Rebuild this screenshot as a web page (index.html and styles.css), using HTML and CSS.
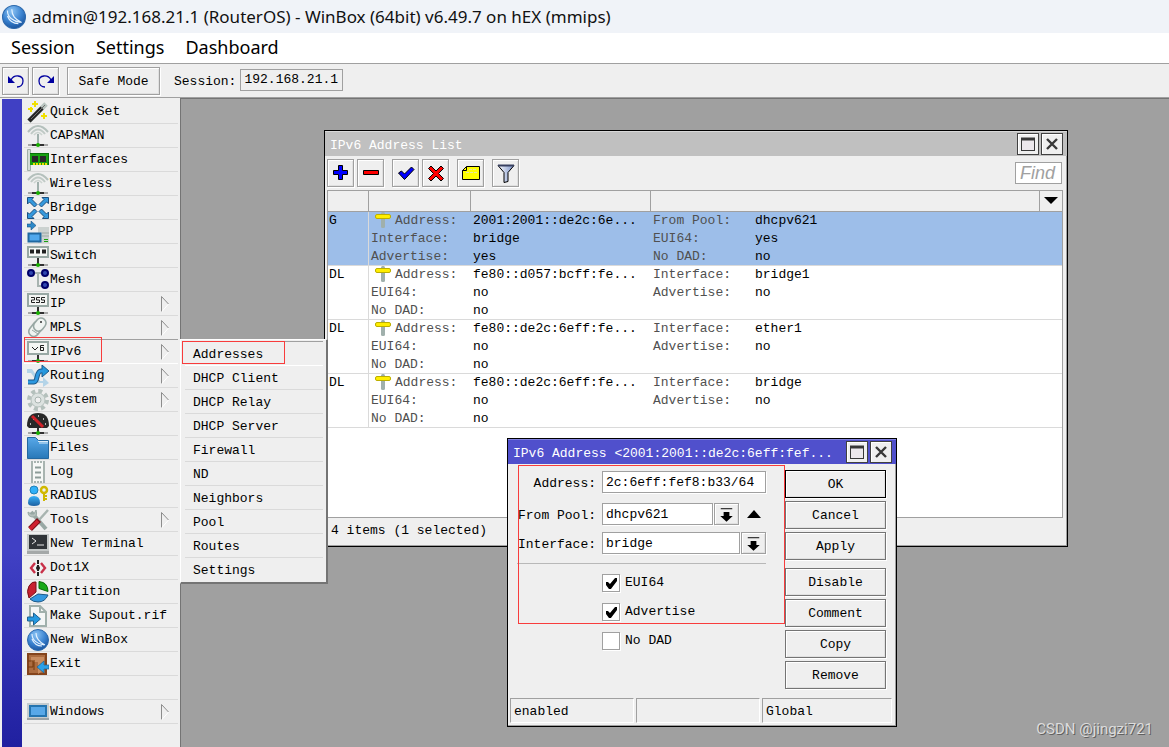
FILE: index.html
```html
<!DOCTYPE html>
<html lang="en">
<head>
<meta charset="utf-8">
<title>admin@192.168.21.1 (RouterOS) - WinBox</title>
<link rel="stylesheet" href="styles.css">
</head>
<body>
<svg class="defs" aria-hidden="true">
  <defs>
    <radialGradient id="ball" cx="40%" cy="25%" r="75%"><stop offset="0" stop-color="#8cc4f4"/><stop offset=".6" stop-color="#3a82d0"/><stop offset="1" stop-color="#1c56a0"/></radialGradient>
    <linearGradient id="folder" x2="0" y2="1"><stop offset="0" stop-color="#58a8e8"/><stop offset="1" stop-color="#2878b8"/></linearGradient>
    <linearGradient id="man" x2="0" y2="1"><stop offset="0" stop-color="#38b0f8"/><stop offset="1" stop-color="#1c60a0"/></linearGradient>
    <linearGradient id="steel" x2="1" y2="0"><stop offset="0" stop-color="#ffffff"/><stop offset="1" stop-color="#7890c8"/></linearGradient>
  </defs>
  <symbol id="logo" viewBox="0 0 22 22"><circle cx="11" cy="11" r="10.5" fill="url(#ball)" stroke="#2c68ac"/><path d="M5 5c0 6 5 10 12 11M9 4c0 6 3 9 9 12M5 10c2 5 6 7 10 7" fill="none" stroke="#e4f2ff" stroke-width="1.1"/></symbol>
  <symbol id="antenna" viewBox="0 0 22 22"><path d="M1 7Q11-5 21 7" fill="none" stroke="#b4c0bc" stroke-width="2"/><path d="M4 9Q11 0 18 9" fill="none" stroke="#c0cac6" stroke-width="2"/><path d="M7 10Q11 5 15 10" fill="none" stroke="#ccd4d0" stroke-width="1.6"/><path d="M11 9v10" stroke="#a0b0ac" stroke-width="2"/><path d="M1 20h20" stroke="#a8a8a8" stroke-width="2"/><path d="M5 20h12" stroke="#303030" stroke-width="2"/><circle cx="11" cy="20" r="2" fill="#18b000"/></symbol>
  <symbol id="netbase" viewBox="0 0 22 22"><path d="M11 12v8" stroke="#303030" stroke-width="2"/><path d="M1 20h20" stroke="#a8a8a8" stroke-width="2"/><path d="M5 20h12" stroke="#303030" stroke-width="2"/><circle cx="11" cy="20" r="2" fill="#18b000"/></symbol>
  <symbol id="arrow" viewBox="0 0 10 18"><path d="M1.500 17V1.500l7 7.500" fill="none" stroke="#8c8c8c"/><path d="M8.500 9l-7 8" fill="none" stroke="#fff"/></symbol>
  <symbol id="pin" viewBox="0 0 16 16"><rect x="6" y="0" width="4" height="16" rx="1.5" fill="#a0b0ac"/><rect x=".5" y="2.5" width="15" height="4" rx="1.5" fill="#ffee00" stroke="#bcae00"/></symbol>
  <symbol id="max" viewBox="0 0 20 20"><rect x="3.500" y="4.500" width="13" height="12" fill="#ece8ec" stroke="#383838"/><path d="M3 5h14" stroke="#383838" stroke-width="3"/></symbol>
  <symbol id="close" viewBox="0 0 20 20"><path d="M5 5l10 10M15 5l-10 10" stroke="#383838" stroke-width="2.400"/></symbol>
  <symbol id="drop" viewBox="0 0 24 20"><path d="M6 4.500h12" stroke="#000"/><path d="M9 8h6v4h3.500l-6.500 6-6.500-6H9z"/></symbol>
</svg>

<header class="titlebar"><svg class="logo"><use href="#logo"/></svg><h1>admin@192.168.21.1 (RouterOS) - WinBox (64bit) v6.49.7 on hEX (mmips)</h1></header>
<nav class="menubar"><button>Session</button><button>Settings</button><button>Dashboard</button></nav>
<div class="toolbar">
  <button class="raised tool" aria-label="Undo"><svg viewBox="0 0 24 24"><path d="M7 11c3-6 12-5 12 1 0 4-3 6-6 6" fill="none" stroke="#0000a0" stroke-width="1.3"/><path d="M4 7v7h7z" fill="#0000a0"/></svg></button>
  <button class="raised tool" aria-label="Redo"><svg viewBox="0 0 24 24"><path d="M17 11c-3-6-12-5-12 1 0 4 3 6 6 6" fill="none" stroke="#0000a0" stroke-width="1.3"/><path d="M20 7v7h-7z" fill="#0000a0"/></svg></button>
  <button class="raised safe">Safe Mode</button>
  <label for="session">Session:</label><input id="session" class="session" value="192.168.21.1" readonly>
</div>

<div class="main">
  <aside class="sidebar">
    <div class="strip"></div>
    <ul class="side">
      <li><button><svg viewBox="0 0 22 22"><path d="M2 20L19 3" stroke="#b8c4c0" stroke-width="5"/><path d="M2 20L15 7" stroke="#242424" stroke-width="4.500"/><path d="M4 18L18 4" stroke="#707070"/><path d="M8 0v6M5 3h6M4 6v5M1 8h5M17 12v6M14 15h6" stroke="#f0e000" stroke-width="2"/></svg>Quick Set</button></li>
      <li><button><svg><use href="#antenna"/></svg>CAPsMAN</button></li>
      <li><button><svg viewBox="0 0 22 22"><path d="M.5.500h3v21h-3z" fill="#d4dcd8" stroke="#a0b0a8"/><path d="M3 4h19v12H3z" fill="#18a010"/><path d="M3 4.500h19M21.500 4v12" stroke="#087008"/><path d="M5 7h6v6H5zM13 7h6v6h-6z" fill="#282828"/><path d="M6 15h15" stroke="#f0e000" stroke-width="2" stroke-dasharray="2 1"/></svg>Interfaces</button></li>
      <li><button><svg><use href="#antenna"/></svg>Wireless</button></li>
      <li><button><svg viewBox="0 0 22 22"><g fill="#3498dc" stroke="#1c5080"><path id="ba" d="M.5.500h6l-1.500 2 5 5-2.500 2.500-5-5-2 2z"/><use href="#ba" transform="rotate(90 11 11)"/><use href="#ba" transform="rotate(180 11 11)"/><use href="#ba" transform="rotate(270 11 11)"/></g></svg>Bridge</button></li>
      <li><button><svg viewBox="0 0 22 22"><path d="M11 6h11v16H11z" fill="#ccd2d0"/><path d="M15 12h7M15 15h7" stroke="#9ca8a4"/><path d="M17 18.500h4M17 20.500h4" stroke="#18a010"/><path d="M0 3h4V0l5 4.500L4 9V6H0z" fill="#2c88c8" stroke="#1c5080" stroke-width=".6"/><rect x="1.500" y="12.500" width="12" height="8" fill="#50a8ec" stroke="#2068a0" stroke-width="2"/></svg>PPP</button></li>
      <li><button><svg viewBox="0 0 22 22"><use href="#netbase"/><rect x="1" y="2" width="20" height="10" fill="#f4f6f4" stroke="#98a8a4" stroke-width="2"/><path d="M3 6.500h16" stroke="#202020" stroke-width="4" stroke-dasharray="4 2"/></svg>Switch</button></li>
      <li><button><svg viewBox="0 0 22 22"><path d="M4 4h14M11 4v13h7" fill="none" stroke="#a8b4b0" stroke-width="2"/><g fill="#3048b0" stroke="#000068" stroke-width="2"><circle cx="4" cy="4" r="3"/><circle cx="18" cy="4" r="3"/><circle cx="18" cy="16" r="3"/></g></svg>Mesh</button></li>
      <li><button><svg viewBox="0 0 22 22"><use href="#netbase"/><rect x="1" y="1" width="20" height="12" fill="#f4f6f4" stroke="#98a8a4" stroke-width="2"/><path d="M4 4.500h3.500v2.500H4.500v2.500H8M13 4.500H9.500v2.500h3v2.500H9M18 4.500h-3.500v2.500h3v2.500H14" fill="none" stroke="#202020"/></svg>IP<svg class="more"><use href="#arrow"/></svg></button></li>
      <li><button><svg viewBox="0 0 22 22"><g fill="#f0f4f2" stroke="#98a8a4" stroke-width="1.600"><rect x="4" y="4" width="10" height="17" rx="5" transform="rotate(38 10 12)"/><rect x="8" y="0" width="10" height="14" rx="5" transform="rotate(38 12 7)"/></g><path d="M5 13l6 4" stroke="#98a8a4"/><circle cx="14" cy="5" r="1" fill="#303030"/></svg>MPLS<svg class="more"><use href="#arrow"/></svg></button></li>
      <li class="open"><button aria-expanded="true"><svg viewBox="0 0 22 22"><use href="#netbase"/><rect x="1" y="1" width="20" height="12" fill="#f4f6f4" stroke="#98a8a4" stroke-width="2"/><path d="M5 6l3 3 3-3M17 4.500h-3.500v5h3v-3h-3" fill="none" stroke="#202020"/></svg>IPv6<svg class="more"><use href="#arrow"/></svg></button>
        <ul class="submenu">
          <li class="current"><button>Addresses</button></li>
          <li><button>DHCP Client</button></li>
          <li><button>DHCP Relay</button></li>
          <li><button>DHCP Server</button></li>
          <li><button>Firewall</button></li>
          <li><button>ND</button></li>
          <li><button>Neighbors</button></li>
          <li><button>Pool</button></li>
          <li><button>Routes</button></li>
          <li><button>Settings</button></li>
        </ul>
      </li>
      <li><button><svg viewBox="0 0 22 22"><path d="M0 4h5l8 12h3v-4l6 6-6 4v-4h-5L4 8H0z" fill="#b4d4e8"/><path d="M1 17h6c4 0 2-11 7-11h2" fill="none" stroke="#1c5888" stroke-width="5"/><path d="M15 0l7 6-7 6z" fill="#2498dc" stroke="#1c5888"/><path d="M1 17h6c4 0 2-11 7-11h3" fill="none" stroke="#2c98e0" stroke-width="3"/></svg>Routing<svg class="more"><use href="#arrow"/></svg></button></li>
      <li><button><svg viewBox="0 0 22 22"><circle cx="11" cy="11" r="9" fill="none" stroke="#b4c0bc" stroke-width="4" stroke-dasharray="4 3.070"/><circle cx="11" cy="11" r="7" fill="#dce2e0" stroke="#b4c0bc"/><circle cx="11" cy="11" r="3" fill="#f0f0f0" stroke="#a8b4b0"/></svg>System<svg class="more"><use href="#arrow"/></svg></button></li>
      <li><button><svg viewBox="0 0 22 22"><use href="#netbase"/><path d="M0 13Q0 0 11 0t11 13l-2 2H2z" fill="#282828"/><path d="M3 11h1M6 6h1M11 3h1M16 6h1M18 11h1" stroke="#e0e0e0" stroke-width="1.500"/><path d="M5 3l11 11" stroke="#d02028" stroke-width="3"/></svg>Queues</button></li>
      <li><button><svg viewBox="0 0 22 22"><path d="M.5.500h8l3 3h10v18H.5z" fill="url(#folder)" stroke="#2468a0"/><path d="M11 4.500h10M12 6h9" stroke="#d8ecfa"/></svg>Files</button></li>
      <li><button><svg viewBox="0 0 22 22"><path d="M4 1h14v20H4z" fill="#f6f8f6"/><path d="M5 0v22M17 0v22" stroke="#a8b4b0" stroke-width="2"/><path d="M4 1h14M4 21h14" stroke="#a8b4b0" stroke-width="2" stroke-dasharray="2 1"/><path d="M8 6.500h6M8 11.500h6M8 16.500h6" stroke="#8c9c98" stroke-width="2"/></svg>Log</button></li>
      <li><button><svg viewBox="0 0 22 22"><circle cx="7" cy="5" r="4" fill="#30b0f8" stroke="#2080b8"/><path d="M1 18q0-7 6-7t6 7q0 3-6 3t-6-3z" fill="url(#man)"/><circle cx="17" cy="5" r="3" fill="none" stroke="#d0b800" stroke-width="2.500"/><path d="M17 8v8M17 11h3M17 14h3" stroke="#d0b800" stroke-width="2"/></svg>RADIUS</button></li>
      <li><button><svg viewBox="0 0 22 22"><path d="M4 3l15 17" stroke="#98a8a4" stroke-width="4"/><path d="M1 3q0 5 5 5t3-7l-2 4-3 0z" fill="#b4c0bc" stroke="#98a8a4"/><path d="M21 1l-9 10" stroke="#a8b4b0" stroke-width="2.500"/><path d="M12 11l-9 9" stroke="#7c1018" stroke-width="5.500"/><path d="M11 12l-8 8" stroke="#d02030" stroke-width="3.500"/></svg>Tools<svg class="more"><use href="#arrow"/></svg></button></li>
      <li><button><svg viewBox="0 0 22 22"><path d="M0 1h22v18H0z" fill="#c4c8c8"/><path d="M0 18h22v3H0z" fill="#a4a8a8"/><path d="M2 2h18v14H2z" fill="#303438"/><path d="M5 5l4 3-4 3M10 12h7" fill="none" stroke="#e8e8e8"/></svg>New Terminal</button></li>
      <li><button><svg viewBox="0 0 22 22"><path d="M8 6l-4 5 4 5M14 6l4 5-4 5" fill="none" stroke="#c83048" stroke-width="2.400"/><path d="M11 3v16" stroke="#202020" stroke-width="2" stroke-dasharray="4 1 6 1"/><circle cx="11" cy="11" r="2" fill="#202020"/></svg>Dot1X</button></li>
      <li><button><svg viewBox="0 0 22 22"><path d="M9 1v10l-7 6Q-1 10 2 5t7-4z" fill="#c82030" stroke="#781018"/><path d="M12 .500q9 1 9 10l-9-3z" fill="#18a818" stroke="#086808"/><path d="M11 13l10 1q-3 7-10 7-5 0-8-3z" fill="#3498e0" stroke="#1c5888"/></svg>Partition</button></li>
      <li><button><svg viewBox="0 0 22 22"><path d="M3 1h10l6 6v14H3z" fill="#f4f6f6" stroke="#a0b0ac" stroke-width="2"/><path d="M13 1v6h6" fill="none" stroke="#a0b0ac" stroke-width="2"/><path d="M.5 12h6V8l7 6-7 6v-4h-6z" fill="#2498e0" stroke="#1c6090"/></svg>Make Supout.rif</button></li>
      <li><button><svg><use href="#logo"/></svg>New WinBox</button></li>
      <li><button><svg viewBox="0 0 22 22"><path d="M1 1h18v20H1z" fill="#ac6c40" stroke="#84441c" stroke-width="2"/><path d="M4 4h13v13l-6 4V9H4z" fill="#c88c60"/><path d="M1 8h5v6H1M7 7v10" fill="none" stroke="#74380c"/><path d="M22 12h-5V8l-7 6 7 6v-4h5z" fill="#2ca0e8" stroke="#1c6090" stroke-width=".7"/></svg>Exit</button></li>
      <li class="spacer"></li>
      <li><button><svg viewBox="0 0 22 22"><path d="M0 2h22v15H0z" fill="#c4ccd0"/><path d="M0 17h22v2H0z" fill="#9ca4a8"/><path d="M3 5h16v10H3z" fill="#58a8e8" stroke="#2474b0" stroke-width="2"/></svg>Windows<svg class="more"><use href="#arrow"/></svg></button></li>
    </ul>
    <div class="mark mark-ipv6"></div>
    <div class="mark mark-addresses"></div>
  </aside>

  <main class="desktop">
    <section class="window list">
      <header class="caption"><h2>IPv6 Address List</h2><button aria-label="Maximize"><svg><use href="#max"/></svg></button><button aria-label="Close"><svg><use href="#close"/></svg></button></header>
      <div class="actions">
        <button class="raised tool" aria-label="Add"><svg viewBox="0 0 24 24"><path d="M9.500 4.500h4v5h5v4h-5v5h-4v-5h-5v-4h5z" fill="#0000ff" stroke="#000"/></svg></button>
        <button class="raised tool" aria-label="Remove"><svg viewBox="0 0 24 24"><path d="M4.500 9.500h15v4h-15z" fill="#f00" stroke="#000"/></svg></button>
        <button class="raised tool gap" aria-label="Enable"><svg viewBox="0 0 24 24"><path d="M4.500 12l3-2 3 3 7-7 2.500 2.500-9.500 10z" fill="#00f" stroke="#000"/></svg></button>
        <button class="raised tool" aria-label="Disable"><svg viewBox="0 0 24 24"><path d="M4.500 7.500l2.500-2.500 5 5 5-5 2.500 2.500-5 5 5 5-2.500 2.500-5-5-5 5-2.500-2.500 5-5z" fill="#f00" stroke="#000"/></svg></button>
        <button class="raised tool gap" aria-label="Comment"><svg viewBox="0 0 24 24"><path d="M7.500 5.500h13v13h-17v-9z" fill="#ff0" stroke="#000"/><path d="M3.500 9.500h4v-4" fill="none" stroke="#000"/><path d="M10 8.500h8M7 11.500h11" stroke="#e8e8a0" stroke-dasharray="3 1"/></svg></button>
        <button class="raised tool gap" aria-label="Filter"><svg viewBox="0 0 24 24"><path d="M4 4.500h16l-6 7v9l-4 1v-10z" fill="url(#steel)" stroke="#000"/><path d="M4 4.500h16" stroke="#384060" stroke-width="2"/></svg></button>
        <input class="find" placeholder="Find" aria-label="Find">
      </div>
      <div class="tablebox">
        <table>
          <colgroup><col class="c-flag"><col class="c-label"><col class="c-value"><col><col class="c-drop"></colgroup>
          <thead><tr><th></th><th></th><th></th><th></th><th><button aria-label="Columns"><svg viewBox="0 0 14 8"><path d="M0 0h14L7 7z"/></svg></button></th></tr></thead>
          <tbody>
            <tr class="selected"><td>G</td><td class="k"><span class="first"><svg><use href="#pin"/></svg>Address:</span><span>Interface:</span><span>Advertise:</span></td><td class="v"><span>2001:2001::de2c:6e...</span><span>bridge</span><span>yes</span></td><td colspan="2"><dl><dt>From Pool:</dt><dd>dhcpv621</dd><dt>EUI64:</dt><dd>yes</dd><dt>No DAD:</dt><dd>no</dd></dl></td></tr>
            <tr><td>DL</td><td class="k"><span class="first"><svg><use href="#pin"/></svg>Address:</span><span>EUI64:</span><span>No DAD:</span></td><td class="v"><span>fe80::d057:bcff:fe...</span><span>no</span><span>no</span></td><td colspan="2"><dl><dt>Interface:</dt><dd>bridge1</dd><dt>Advertise:</dt><dd>no</dd></dl></td></tr>
            <tr><td>DL</td><td class="k"><span class="first"><svg><use href="#pin"/></svg>Address:</span><span>EUI64:</span><span>No DAD:</span></td><td class="v"><span>fe80::de2c:6eff:fe...</span><span>no</span><span>no</span></td><td colspan="2"><dl><dt>Interface:</dt><dd>ether1</dd><dt>Advertise:</dt><dd>no</dd></dl></td></tr>
            <tr><td>DL</td><td class="k"><span class="first"><svg><use href="#pin"/></svg>Address:</span><span>EUI64:</span><span>No DAD:</span></td><td class="v"><span>fe80::de2c:6eff:fe...</span><span>no</span><span>no</span></td><td colspan="2"><dl><dt>Interface:</dt><dd>bridge</dd><dt>Advertise:</dt><dd>no</dd></dl></td></tr>
          </tbody>
        </table>
      </div>
      <footer class="count">4 items (1 selected)</footer>
    </section>

    <section class="window dialog">
      <header class="caption"><h2>IPv6 Address &lt;2001:2001::de2c:6eff:fef...</h2><button aria-label="Maximize"><svg><use href="#max"/></svg></button><button aria-label="Close"><svg><use href="#close"/></svg></button></header>
      <form class="body">
        <div class="fields">
          <div class="row"><label for="addr">Address:</label><input id="addr" value="2c:6eff:fef8:b33/64"></div>
          <div class="row pool"><label for="pool">From Pool:</label><input id="pool" value="dhcpv621"><button type="button" class="raised drop" aria-label="Choose pool"><svg><use href="#drop"/></svg></button><button type="button" class="up" aria-label="Clear pool"><svg viewBox="0 0 14 8"><path d="M0 8h14L7 0z"/></svg></button></div>
          <div class="row"><label for="iface">Interface:</label><input id="iface" value="bridge"><button type="button" class="raised drop" aria-label="Choose interface"><svg><use href="#drop"/></svg></button></div>
          <hr>
          <label class="check"><input type="checkbox" checked>EUI64</label>
          <label class="check"><input type="checkbox" checked>Advertise</label>
          <label class="check"><input type="checkbox">No DAD</label>
        </div>
        <div class="buttons">
          <button type="button" class="raised default">OK</button>
          <button type="button" class="raised">Cancel</button>
          <button type="button" class="raised">Apply</button>
          <button type="button" class="raised apart">Disable</button>
          <button type="button" class="raised">Comment</button>
          <button type="button" class="raised">Copy</button>
          <button type="button" class="raised">Remove</button>
        </div>
      </form>
      <footer class="status"><span>enabled</span><span></span><span>Global</span></footer>
      <div class="mark mark-form"></div>
    </section>
    <p class="watermark">CSDN @jingzi721</p>
  </main>
</div>
</body>
</html>
```

FILE: styles.css
```css
* { box-sizing: border-box; }
body {
  margin: 0;
  min-height: 100vh;
  display: flex;
  flex-direction: column;
  background: #efefef;
  color: #000;
  font: 13px/18px "Liberation Mono", monospace;
  overflow: hidden;
}
h1, h2, ul, dl, dd, p { margin: 0; padding: 0; font-weight: normal; }
ul { list-style: none; }
button, input { font: inherit; color: inherit; margin: 0; padding: 0; border-radius: 0; outline: 0; }
button { border: 0; background: none; }
svg { display: block; flex: none; }
.defs { position: absolute; width: 0; height: 0; }

.titlebar { display: flex; align-items: center; gap: 6px; height: 33px; padding-left: 2px; background: #f0f3f8; }
.logo { width: 24px; height: 24px; }
.titlebar h1 { font: 17px/24px "Noto Sans", sans-serif; color: #111; white-space: nowrap; }
.menubar { display: flex; gap: 21px; height: 30px; padding-left: 11px; background: #fff; }
.menubar button { height: 28px; font: 18px/28px "Noto Sans", sans-serif; }
.toolbar { display: flex; align-items: center; height: 35px; padding: 0 2px; border-top: 1px solid #a0a0a0; border-bottom: 1px solid #a0a0a0; }

.raised {
  border: 1px solid #a0a0a0;
  background: #efefef;
  box-shadow: inset 1px 1px #fff, inset -1px -1px #e0e0e0, 1px 1px #fff;
}
.tool { width: 27px; height: 28px; display: flex; align-items: center; justify-content: center; }
.tool svg { width: 24px; height: 24px; }
.toolbar .tool { margin-right: 3px; }
.safe { width: 93px; height: 28px; margin: 0 14px 0 5px; padding-top: 2px; }
.toolbar label { padding-top: 2px; }
.session { width: 103px; height: 22px; margin: 0 0 2px 4px; padding: 0 3px; border: 1px solid #a0a0a0; background: #efefef; }

.main { flex: 1; display: flex; }
.sidebar { position: relative; display: flex; width: 180px; padding-left: 2px; background: #efefef; }
.strip { width: 20px; margin-top: 1px; background: linear-gradient(#4040c4 70%, #2020a0); }
.side { flex: 1; padding: 2px 2px 0; }
.side > li { position: relative; height: 24px; border-bottom: 1px solid #dadada; }
.side > li > button { display: flex; align-items: center; width: 100%; height: 23px; padding-left: 3px; gap: 1px; white-space: nowrap; }
.side button svg { width: 22px; height: 22px; }
.side button .more { width: 10px; height: 18px; margin-left: auto; margin-right: 8px; }
.side .open { border-bottom-color: #fff; box-shadow: 0 -1px #a0a0a0; }
.submenu {
  position: absolute; z-index: 5; top: -1px; left: 156px; width: 148px; padding: 2px 3px 0 4px;
  background: #efefef; border: 1px solid #fff; border-right: 2px solid #747474; border-bottom: 2px solid #747474;
}
.submenu li { height: 24px; border-bottom: 1px solid #dadada; }
.submenu li:last-child { border-bottom: 0; }
.submenu .current { border-bottom-color: #fff; box-shadow: 0 -1px #a0a0a0; }
.submenu button { display: block; width: 100%; padding: 4px 8px 0; text-align: left; }

.mark { position: absolute; border: 1px solid #f83c3c; pointer-events: none; z-index: 6; }
.mark-ipv6 { left: 24px; top: 239px; width: 78px; height: 25px; }
.mark-addresses { left: 182px; top: 243px; width: 103px; height: 23px; }
.mark-form { left: 10px; top: 26px; width: 267px; height: 159px; }

.desktop { position: relative; flex: 1; background: #a0a0a0; border-left: 1px solid #747474; border-top: 1px solid #747474; }
.window { position: absolute; display: flex; flex-direction: column; background: #efefef; border: 1px solid #000; }
.list { left: 143px; top: 31px; width: 744px; min-height: 417px; box-shadow: inset -1px -1px #a0a0a0; }
.dialog { left: 326px; top: 339px; width: 390px; z-index: 2; box-shadow: inset -1px -1px #a0a0a0; }
.caption { display: flex; align-items: center; gap: 2px; height: 25px; padding: 0 4px 0 5px; background: #c0c0c0; color: #fff; border-top: 1px solid #d8d8d8; }
.dialog .caption { background: #5050cc; border-color: #8080e0; }
.caption h2 { flex: 1; font-size: 13px; line-height: 18px; padding-top: 4px; white-space: nowrap; }
.caption button { width: 22px; height: 22px; border: 1px solid #404040; background: #efefef; box-shadow: inset 1px 1px #fff; }
.caption button svg { width: 20px; height: 20px; }

.actions { display: flex; gap: 3px; height: 34px; padding: 3px 5px 0 2px; }
.actions .gap { margin-left: 5px; }
.find { width: 47px; height: 22px; margin: 3px 0 0 auto; padding: 0 4px; border: 1px solid #a0a0a0; background: #fff; font: italic 18px/20px "Liberation Sans", sans-serif; }
.find::placeholder { color: #a0a0a0; opacity: 1; }
.tablebox { flex: 1; margin: 0 4px 0 2px; background: #fff; border: 1px solid #a0a0a0; }
table { width: 100%; border-collapse: separate; border-spacing: 0; table-layout: fixed; }
.c-flag { width: 40px; }
.c-label { width: 102px; }
.c-value { width: 180px; }
.c-drop { width: 23px; }
th { height: 21px; padding: 0; background: #efefef; border-bottom: 1px solid #a0a0a0; border-left: 1px solid #a0a0a0; }
th:first-child { border-left: 0; }
th button { display: flex; align-items: center; justify-content: center; width: 100%; height: 20px; }
th svg { width: 14px; height: 8px; }
td { height: 54px; padding: 0 0 0 3px; vertical-align: top; box-shadow: inset 0 -1px #dadada; white-space: nowrap; }
td span { display: block; }
.k { padding-left: 2px; border-left: 1px solid #dadada; color: #505050; }
.k .first { display: flex; gap: 4px; padding-left: 4px; }
.k svg { width: 16px; height: 16px; }
td:first-child { padding-left: 1px; }
.selected { background: #9dbee9; }
dl { display: grid; grid-template-columns: 102px 1fr; }
dt { color: #505050; }
.count { height: 28px; padding: 4px 0 0 6px; }

.body { display: flex; justify-content: space-between; padding: 6px 10px 9px 9px; }
.fields { width: 249px; }
.row { display: flex; height: 22px; margin-bottom: 7px; }
.row:first-child { margin: 1px 0 10px; }
.row label { width: 79px; margin-right: 6px; line-height: 26px; text-align: right; }
.row input { flex: 1; min-width: 0; padding: 2px 3px 0; border: 1px solid #a0a0a0; background: #fff; box-shadow: 1px 1px #fff; }
.drop { width: 25px; margin-left: 1px; }
.drop svg { width: 23px; height: 20px; }
.up { width: 27px; padding-left: 8px; }
.up svg { width: 14px; height: 8px; }
hr { height: 1px; margin: 9px 0 10px; border: 0; background: #b8b8b8; }
.check { display: flex; align-items: center; gap: 5px; width: 160px; height: 18px; margin: 0 0 11px 85px; line-height: 20px; }
.check input { appearance: none; position: relative; width: 18px; height: 18px; border: 1px solid #a0a0a0; background: #fff; box-shadow: 1px 1px #fff; }
.check input:checked::before {
  content: ""; position: absolute; left: 3px; top: 3px; width: 11px; height: 11px; background: #000;
  clip-path: polygon(0 36%, 18% 36%, 36% 54%, 82% 0, 100% 0, 100% 28%, 45% 100%, 27% 100%, 0 64%);
}
.buttons { display: flex; flex-direction: column; gap: 3px; width: 101px; }
.buttons button { height: 28px; padding-top: 2px; border-color: #747474; }
.buttons .default { border-color: #000; }
.buttons .apart { margin-top: 5px; }
.status { display: grid; grid-template-columns: 124px 124px 1fr; gap: 2px; padding: 0 4px 3px 2px; }
.status span { height: 25px; padding: 4px 3px 0; border: 1px solid #fff; border-top-color: #a0a0a0; border-left-color: #a0a0a0; }
.watermark { position: absolute; right: 16px; bottom: 9px; font: 15px/18px "Roboto", sans-serif; color: #dcdcdc; text-shadow: 1px 1px #606060; }
```
